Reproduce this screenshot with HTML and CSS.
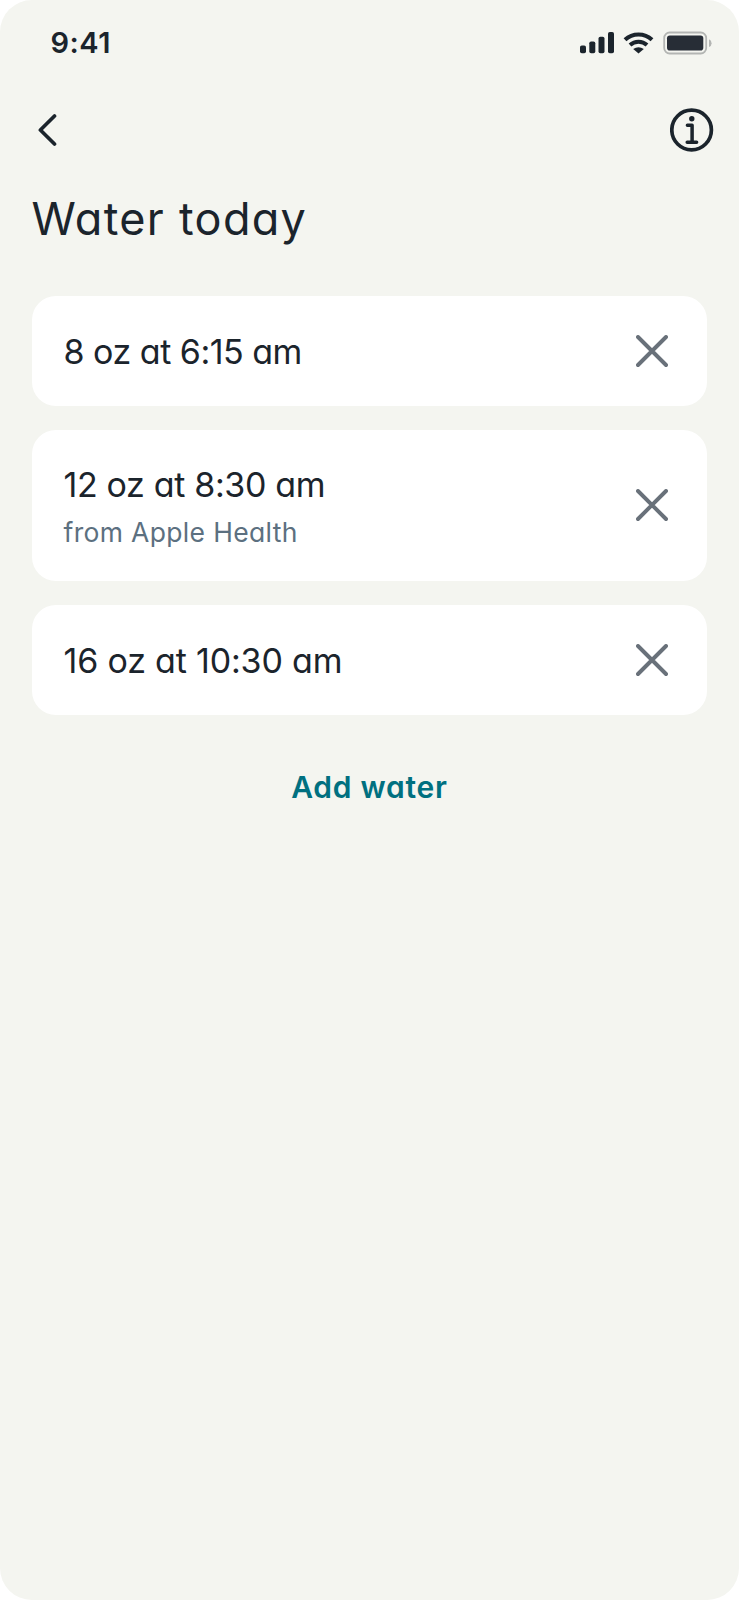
FILE: index.html
```html
<!DOCTYPE html>
<html lang="en">
<head>
  <meta charset="UTF-8">
  <meta name="viewport" content="width=device-width, initial-scale=1.0">
  <title>Water today</title>
  <link rel="stylesheet" href="styles.css">
</head>
<body>
  <div class="screen">
    <div class="status-bar">
      <span class="time">9:41</span>
      <svg class="status-icons" width="134" height="24" viewBox="0 0 134 24">
        <g fill="#1b242c">
          <rect x="0" y="14.5" width="6" height="7.8" rx="1.8"/>
          <rect x="9.3" y="10.5" width="6" height="11.8" rx="1.8"/>
          <rect x="18.5" y="5.8" width="6" height="16.5" rx="1.8"/>
          <rect x="28" y="1" width="6" height="21.3" rx="1.8"/>
          <path d="M53.2 17.9q5.3-3.4 10.6 0l-5.3 4.7z"/>
        </g>
        <g fill="none" stroke="#1b242c" stroke-width="4">
          <path d="M45 8.8c7.5-7.2 19.5-7.2 27 0"/>
          <path d="M50 14c4.8-4.4 12.2-4.4 17 0"/>
        </g>
        <rect x="84.2" y="1.5" width="42" height="21" rx="5.5" fill="none" stroke="#b3b5b3" stroke-width="1.8"/>
        <rect x="87" y="4.5" width="36.3" height="15" rx="2.8" fill="#272d36"/>
        <path d="M129 8.3q2.6 1.2 2.6 3.9t-2.6 3.9z" fill="#b3b5b3"/>
      </svg>
    </div>

    <div class="nav">
      <button class="icon-btn" aria-label="Back">
        <svg width="20" height="34" viewBox="0 0 20 34" fill="none" stroke="#1b242c" stroke-width="3.7" stroke-linecap="round" stroke-linejoin="round">
          <path d="M16.5 3L2.4 17 16.5 31"/>
        </svg>
      </button>
      <button class="icon-btn" aria-label="Info">
        <svg width="44" height="44" viewBox="0 0 44 44" fill="none" stroke="#1b242c" stroke-linecap="round" stroke-linejoin="round">
          <circle cx="21.6" cy="22" r="19.8" stroke-width="3.7"/>
          <circle cx="21.8" cy="10.8" r="2.7" fill="#1b242c" stroke="none"/>
          <path d="M17.4 17.2h4.7v17M17.2 34.2h9.4" stroke-width="3.5"/>
        </svg>
      </button>
    </div>

    <h1>Water today</h1>

    <div class="card-list">
      <div class="card">
        <div class="entry first">8 oz at 6:15 am</div>
        <button class="icon-btn" aria-label="Remove">
          <svg width="32" height="32" viewBox="0 0 32 32" stroke="#69717a" stroke-width="3.9" stroke-linecap="round">
            <path d="M2 2l28 28M30 2L2 30"/>
          </svg>
        </button>
      </div>
      <div class="card tall">
        <div class="entry second">12 oz at 8:30 am
          <div class="source">from Apple Health</div>
        </div>
        <button class="icon-btn" aria-label="Remove">
          <svg width="32" height="32" viewBox="0 0 32 32" stroke="#69717a" stroke-width="3.9" stroke-linecap="round">
            <path d="M2 2l28 28M30 2L2 30"/>
          </svg>
        </button>
      </div>
      <div class="card">
        <div class="entry third">16 oz at 10:30 am</div>
        <button class="icon-btn" aria-label="Remove">
          <svg width="32" height="32" viewBox="0 0 32 32" stroke="#69717a" stroke-width="3.9" stroke-linecap="round">
            <path d="M2 2l28 28M30 2L2 30"/>
          </svg>
        </button>
      </div>
    </div>

    <button class="add-water">Add water</button>
  </div>
</body>
</html>
```
FILE: styles.css
```css
body {
  margin: 0;
  background: white;
  font-family: Inter, "Open Sans", sans-serif;
  font-feature-settings: "cv11";
  color: #1b242c;
}
.screen {
  box-sizing: border-box;
  height: 1600px;
  padding: 0 32px;
  background: #f4f5f0;
  border-radius: 32px;
  display: flex;
  flex-direction: column;
}
.status-bar {
  display: flex;
  justify-content: space-between;
  align-items: flex-start;
  height: 108px;
  padding: 31px 0 0 18.5px;
  margin-right: -6.5px;
  box-sizing: border-box;
}
.time {
  font-size: 29px;
  line-height: 24px;
  font-weight: 600;
  letter-spacing: 0.5px;
}
.status-icons {
  display: block;
}
.nav {
  display: flex;
  justify-content: space-between;
  align-items: center;
  height: 44px;
  padding-left: 5.5px;
  margin-right: -6.5px;
}
.icon-btn {
  padding: 0;
  border: none;
  background: none;
  cursor: pointer;
}
.icon-btn svg {
  display: block;
}
h1 {
  margin: 37px 0 46.5px -0.5px;
  font-size: 45px;
  line-height: 60px;
  font-weight: 400;
  letter-spacing: 1.3px;
}
.card-list {
  display: flex;
  flex-direction: column;
  gap: 24px;
}
.card {
  display: flex;
  justify-content: space-between;
  align-items: center;
  box-sizing: border-box;
  height: 110px;
  padding: 0 39px 0 31.5px;
  background: white;
  border-radius: 24px;
}
.card.tall {
  height: 151px;
}
.entry {
  font-size: 34px;
  line-height: 48px;
  padding-top: 2px;
}
.first {
  letter-spacing: -0.5px;
}
.second {
  padding-top: 4px;
  letter-spacing: -0.35px;
}
.third {
  letter-spacing: -0.18px;
}
.source {
  padding-top: 2px;
  font-size: 26.5px;
  line-height: 42px;
  letter-spacing: 0.34px;
  color: #5c7080;
}
.add-water {
  align-self: center;
  margin-top: 52.5px;
  padding: 0;
  border: none;
  background: none;
  font: inherit;
  font-feature-settings: "cv11";
  font-size: 30px;
  line-height: 40px;
  font-weight: 600;
  letter-spacing: 0.75px;
  color: #007080;
  cursor: pointer;
}
```
